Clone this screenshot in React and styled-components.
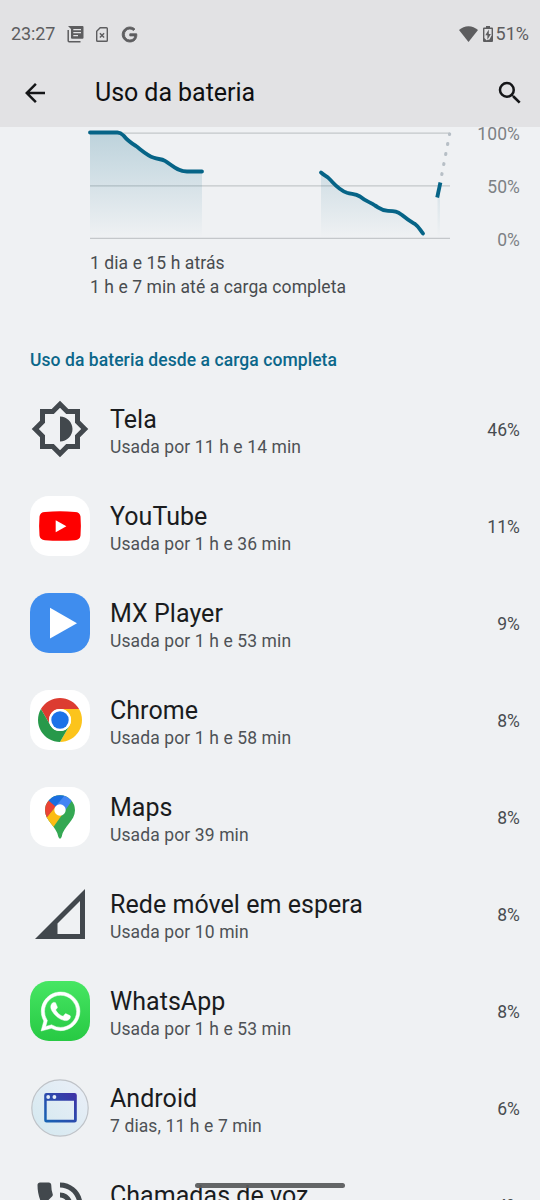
import React from 'react';
import styled, { createGlobalStyle } from 'styled-components';
import { SiGoogle, SiWhatsapp } from 'react-icons/si';

const GlobalStyle = createGlobalStyle`
    * {
        box-sizing: border-box;
    }

    body {
        margin: 0;
        background: #eff1f3;
        font-family: Roboto, "Noto Sans", sans-serif;
    }
`;

const Screen = styled.div`
    position: relative;
    display: flex;
    flex-direction: column;
    width: 540px;
    height: 1200px;
    overflow: hidden;
    background: #eff1f3;
`;

const Header = styled.header`
    flex: none;
    height: 127px;
    background: #e2e2e4;
`;

const StatusBar = styled.div`
    display: flex;
    align-items: center;
    justify-content: space-between;
    height: 58px;
    padding: 10px 11px 0 11px;
    color: #5d5d5f;
    font-size: 18px;
    line-height: 24px;
`;

const StatusGroup = styled.div`
    display: flex;
    align-items: center;
    gap: ${( { $gap } ) => $gap}px;
`;

const Clock = styled.span`
    letter-spacing: -0.1px;
`;

const Toolbar = styled.div`
    display: flex;
    align-items: center;
    height: 69px;
    padding: 0 15px 0 20px;
    color: #151618;
`;

const Title = styled.h1`
    flex: 1;
    margin: 0 0 0 45px;
    color: #0f1011;
    font-size: 25px;
    font-weight: 400;
    letter-spacing: -0.05px;
    line-height: 32px;
`;

const IconButton = styled.button`
    display: flex;
    padding: 0;
    border: 0;
    background: none;
    color: inherit;
`;

const ChartSection = styled.section`
    flex: none;
    display: flex;
    justify-content: space-between;
    height: 122px;
    padding: 0 20px 0 80px;
`;

const ScaleLabels = styled.div`
    display: flex;
    flex-direction: column;
    justify-content: space-between;
    height: 130px;
    margin-top: -5px;
    color: #7d8185;
    font-size: 17.5px;
    letter-spacing: 0.1px;
    line-height: 24px;
    text-align: right;
`;

const Summary = styled.p`
    flex: none;
    height: 92px;
    margin: 0;
    padding: 2px 0 0 90px;
    color: #484c4f;
    font-size: 17.5px;
    letter-spacing: 0.08px;
    line-height: 24px;
`;

const SectionTitle = styled.h2`
    flex: none;
    height: 40px;
    margin: 0;
    padding: 7px 0 0 30px;
    color: #0b678a;
    font-size: 17.5px;
    font-weight: 500;
    letter-spacing: 0.07px;
    line-height: 24px;
`;

const List = styled.ul`
    flex: none;
    margin: 0;
    padding: 0;
    list-style: none;
`;

const Row = styled.li`
    display: flex;
    align-items: center;
    height: 97px;
    padding: 0 20px 0 30px;
`;

const Label = styled.div`
    flex: 1;
    margin-left: 20px;
    padding-top: 5px;
`;

const Name = styled.div`
    color: #1a1c1e;
    font-size: 25px;
    letter-spacing: 0.04px;
    line-height: 30px;
`;

const Detail = styled.div`
    color: #4e5256;
    font-size: 17.5px;
    letter-spacing: 0.11px;
    line-height: 25px;
`;

const Percent = styled.span`
    color: #484c50;
    font-size: 17.5px;
    letter-spacing: 0.1px;
    line-height: 24px;
`;

const Tile = styled.div`
    flex: none;
    display: flex;
    align-items: center;
    justify-content: center;
    width: 60px;
    height: 60px;
    margin-bottom: 1px;
    border-radius: 19px;
    background: ${( { $background } ) => $background || 'transparent'};
    color: ${( { $color } ) => $color || '#42484d'};
`;

// gesture bar floats over the list
const HomeHandle = styled.div`
    position: absolute;
    bottom: 12px;
    left: 195px;
    width: 150px;
    height: 5px;
    border-radius: 3px;
    background: rgba(90, 91, 92, 0.94);
`;

const Glyph = ( { d, size = 60 } ) => (
    <svg width={size} height={size} viewBox="0 0 24 24" fill="currentColor">
        <path fillRule="evenodd" d={d} />
    </svg>
);

const paths = {
    back: 'M20 11H7.83l5.59-5.59L12 4l-8 8 8 8 1.41-1.41L7.83 13H20v-2z',
    search: 'M15.5 14h-.79l-.28-.27A6.47 6.47 0 0 0 16 9.5 6.5 6.5 0 1 0 9.5 16c1.61 0 3.09-.59 4.23-1.57l.27.28v.79l5 4.99L20.49 19l-4.99-5zm-6 0a4.5 4.5 0 1 1 0-9 4.5 4.5 0 0 1 0 9z',
    brightness: 'M20 8.69V4h-4.69L12 .69 8.69 4H4v4.69L.69 12 4 15.31V20h4.69L12 23.31 15.31 20H20v-4.69L23.31 12 20 8.69zM18 14.48V18h-3.52L12 20.48 9.52 18H6v-3.52L3.52 12 6 9.52V6h3.52L12 3.52 14.48 6H18v3.52L20.48 12 18 14.48zM12 7v10c2.76 0 5-2.24 5-5s-2.24-5-5-5z',
    signal: 'M2 22h20V2L2 22zM11 15.83l9-9V20h-9z',
    call: 'M20 15.5c-1.25 0-2.45-.2-3.57-.57a1.02 1.02 0 0 0-1.02.24l-2.2 2.2a15.05 15.05 0 0 1-6.59-6.59l2.2-2.21a.96.96 0 0 0 .25-1A11.36 11.36 0 0 1 8.5 4c0-.55-.45-1-1-1H4c-.55 0-1 .45-1 1 0 9.39 7.61 17 17 17 .55 0 1-.45 1-1v-3.5c0-.55-.45-1-1-1zM19 12h2c0-4.97-4.03-9-9-9v2c3.87 0 7 3.13 7 7zM15 12h2c0-2.76-2.24-5-5-5v2c1.66 0 3 1.34 3 3z'
};

const NewsIcon = () => (
    <svg width="17" height="17" viewBox="0 0 17 17">
        <path fill="currentColor" fillRule="evenodd" d="M1 0h14.5q1 0 1 1v10.800q0 1-1 1H5q-1 0-1-1V3zM6.300 3v1.300h7.700V3zM6.300 6v1.300h7.700V6zM6.300 9v1.300h4.700V9z" />
        <path fill="none" stroke="currentColor" strokeWidth="1.500" d="M1.200 4v10.800q0 .9.900.9H13.500" />
    </svg>
);

const SimIcon = () => (
    <svg width="12" height="15" viewBox="0 0 12 15" fill="none" stroke="currentColor" strokeWidth="1.400">
        <path d="M4.200.7h6.200q.9 0 .9.900v11.800q0 .9-.9.9H1.600q-.9 0-.9-.9V4.300z" />
        <path d="M3.900 6.200l4.200 4.200M8.100 6.200l-4.200 4.200" />
    </svg>
);

const WifiIcon = () => (
    <svg width="19" height="16" viewBox="0 0 19 16">
        <path fill="currentColor" d="M9.500 16L0 4.100Q4.200.3 9.500.3T19 4.100z" />
    </svg>
);

const BatteryIcon = () => (
    <svg width="10" height="16" viewBox="0 0 10 16">
        <path fill="currentColor" d="M3 0h4v1.500h2q1 0 1 1V15q0 1-1 1H1q-1 0-1-1V2.500q0-1 1-1h2z" />
        <path fill="#e2e2e4" d="M1.400 3h7.200v6.500L6.500 13.500 3.500 14.300 1.400 12z" />
        <path fill="currentColor" d="M5.800 3.500L2.300 9.300h2.100v4.500l3.500-5.900H5.800z" />
    </svg>
);

const BatteryChart = () => (
    <svg width="380" height="122" viewBox="80 127 380 122" fill="none">
        <defs>
            <linearGradient id="area" gradientUnits="userSpaceOnUse" x1="0" y1="133" x2="0" y2="238">
                <stop offset="0" stopColor="#0b678a" stopOpacity="0.22" />
                <stop offset="1" stopColor="#0b678a" stopOpacity="0" />
            </linearGradient>
        </defs>
        <path stroke="#c4c7ca" strokeWidth="1.300" d="M90 133.200H450M90 185.800H450M90 238.400H450" />
        <path fill="url(#area)" d="M90 132.500H118Q121 132.500 124 136C128 141 132 144 137 147C143 152 147 156 154 158C158 159.500 161 159 165 161C172 165 177 171 187 171.500H202V238H90z" />
        <path fill="url(#area)" d="M321 172.500C329 177 336 188 345 192.500C351 195 355 193.500 361 197C367 202 373 203 379 208C389 213 394 208 401 213C407 216 412 222 417 225Q420 228 423 233.500V238H321z" />
        <path fill="url(#area)" d="M437.500 196L440 184V238H437.500z" />
        <g stroke="#066487" strokeWidth="3.800" strokeLinecap="round" strokeLinejoin="round">
            <path d="M90 132.500H117.500Q120.500 132.500 123.500 135.500C127 140 131 143 136 146C142 150.500 147 155.500 154 157.800C158 159.500 161 158.500 165 160.800C172 165 177 171.300 187 171.500H202" />
            <path d="M321 172.500C324.500 175.500 327 176.500 329 178.500C335 184.500 338 189.500 347 192.800C352 194.500 355 193.500 360 196.500C366 201.500 370 202 375 205.500C380 208.500 381 210.500 388 210.800C395 211 397 211.500 402 215C408 220 410 221 415 224C419 227 420 230 423 233.500" />
            <path strokeLinecap="butt" d="M437.200 197.500L440.400 182.500" />
        </g>
        <path stroke="#b7bfc6" strokeWidth="3.200" strokeLinecap="round" strokeDasharray="0.800 9.400" d="M441.800 174.500L449.600 134" />
    </svg>
);

const YouTubeIcon = () => (
    <svg width="60" height="60" viewBox="0 0 60 60">
        <path fill="#fe0000" d="M15 15.900Q30 14.600 45 15.900Q50 16.100 50.500 20.500Q51.300 30 50.500 39.500Q50 43.900 45 44.200Q30 45.300 15 44.200Q10 43.900 9.500 39.500Q8.700 30 9.500 20.500Q10 16.100 15 15.900z" />
        <path fill="#fff" d="M25.700 24.200v12l10.700-6z" />
    </svg>
);

const PlayerIcon = () => (
    <svg width="60" height="60" viewBox="0 0 60 60">
        <path fill="#fff" d="M20 14.800v30.800l27-15.400z" />
    </svg>
);

const ChromeIcon = () => (
    <svg width="60" height="60" viewBox="0 0 60 60">
        <path fill="#dc3c31" d="M10.950 19A22 22 0 0 1 49.050 19H30A11 11 0 0 0 20.470 35.500z" />
        <path fill="#fcc41c" d="M49.050 19A22 22 0 0 1 30 52L39.530 35.500A11 11 0 0 0 30 19z" />
        <path fill="#27994a" d="M30 52A22 22 0 0 1 10.950 19L20.470 35.500A11 11 0 0 0 39.530 35.500z" />
        <circle cx="30" cy="30" r="11" fill="#fff" />
        <circle cx="30" cy="30" r="8.700" fill="#1c72e8" />
    </svg>
);

const MapsIcon = () => (
    <svg width="60" height="60" viewBox="0 0 60 60">
        <defs>
            <clipPath id="pin">
                <path d="M30 8.300A15 15 0 0 1 45 23.300C45 34 33.500 39 31.600 50Q30 53.400 28.400 50C26.500 39 15 34 15 23.300A15 15 0 0 1 30 8.300z" />
            </clipPath>
        </defs>
        <g clipPath="url(#pin)">
            <path fill="#34a853" d="M10 5h40v50H10z" />
            <path fill="#fbbc14" d="M10 38L26 19L34 25L22 42z" />
            <path fill="#ea4335" d="M10 5L26 19L16 31.500L10 38z" />
            <path fill="#1a6ee0" d="M12 5L18.500 13.500L26 20L37.500 5z" />
            <path fill="#4285f4" d="M37.500 5L25 20L34 25L48 5z" />
        </g>
        <circle cx="30" cy="23" r="5.700" fill="#fff" />
    </svg>
);

const AndroidIcon = () => (
    <svg width="60" height="60" viewBox="0 0 60 60">
        <defs>
            <linearGradient id="disc" x1="0" y1="1" x2="1" y2="0">
                <stop offset="0" stopColor="#d3e8ef" />
                <stop offset="1" stopColor="#ebeff8" />
            </linearGradient>
            <linearGradient id="window" x1="0" y1="1" x2="1" y2="0">
                <stop offset="0" stopColor="#1565b4" />
                <stop offset="1" stopColor="#4030a6" />
            </linearGradient>
        </defs>
        <circle cx="30" cy="30" r="28.200" fill="url(#disc)" stroke="#bfc3c8" strokeWidth="1.200" />
        <path fill="url(#window)" fillRule="evenodd" d="M16.500 15h28q2.300 0 2.300 2.300v24.900q0 2.300-2.300 2.300h-28q-2.300 0-2.300-2.300V17.300q0-2.300 2.300-2.300zM16.700 22.800v19h27.300v-19z" />
        <circle cx="18.200" cy="19" r="1.900" fill="#e4edf8" />
        <circle cx="24.400" cy="19" r="1.900" fill="#e4edf8" />
    </svg>
);

const GoogleMark = styled( SiGoogle )`
    margin-left: 2px;
    overflow: visible;
    stroke: currentColor;
    stroke-width: 1.4px;
`;

const WhatsAppMark = styled( SiWhatsapp )`
    overflow: visible;
    stroke: currentColor;
    stroke-width: 0.3px;
`;

const apps = [
    { name: 'Tela', detail: 'Usada por 11 h e 14 min', percent: 46, icon: <Glyph d={paths.brightness} /> },
    { name: 'YouTube', detail: 'Usada por 1 h e 36 min', percent: 11, icon: <YouTubeIcon />, background: '#fff' },
    { name: 'MX Player', detail: 'Usada por 1 h e 53 min', percent: 9, icon: <PlayerIcon />, background: '#3f8dee' },
    { name: 'Chrome', detail: 'Usada por 1 h e 58 min', percent: 8, icon: <ChromeIcon />, background: '#fff' },
    { name: 'Maps', detail: 'Usada por 39 min', percent: 8, icon: <MapsIcon />, background: '#fff' },
    { name: 'Rede móvel em espera', detail: 'Usada por 10 min', percent: 8, icon: <Glyph d={paths.signal} /> },
    { name: 'WhatsApp', detail: 'Usada por 1 h e 53 min', percent: 8, icon: <WhatsAppMark size={39} />, background: 'linear-gradient(#46e663, #27c943)', color: '#fff' },
    { name: 'Android', detail: '7 dias, 11 h e 7 min', percent: 6, icon: <AndroidIcon /> },
    { name: 'Chamadas de voz', detail: '', percent: 4, icon: <Glyph d={paths.call} /> }
];

const AppRow = ( { app } ) => (
    <Row>
        <Tile $background={app.background} $color={app.color}>{app.icon}</Tile>
        <Label>
            <Name>{app.name}</Name>
            <Detail>{app.detail || '\u00a0'}</Detail>
        </Label>
        <Percent>{app.percent}%</Percent>
    </Row>
);

export default function App () {
    return (
        <Screen>
            <GlobalStyle />
            <Header>
                <StatusBar>
                    <StatusGroup $gap={12}>
                        <Clock>23:27</Clock>
                        <NewsIcon />
                        <SimIcon />
                        <GoogleMark size={15} />
                    </StatusGroup>
                    <StatusGroup $gap={5}>
                        <WifiIcon />
                        <StatusGroup $gap={3}>
                            <BatteryIcon />
                            <span>51%</span>
                        </StatusGroup>
                    </StatusGroup>
                </StatusBar>
                <Toolbar>
                    <IconButton aria-label="Voltar"><Glyph d={paths.back} size={30} /></IconButton>
                    <Title>Uso da bateria</Title>
                    <IconButton aria-label="Pesquisar"><Glyph d={paths.search} size={30} /></IconButton>
                </Toolbar>
            </Header>
            <ChartSection>
                <BatteryChart />
                <ScaleLabels>
                    <span>100%</span>
                    <span>50%</span>
                    <span>0%</span>
                </ScaleLabels>
            </ChartSection>
            <Summary>
                1 dia e 15 h atrás<br />
                1 h e 7 min até a carga completa
            </Summary>
            <SectionTitle>Uso da bateria desde a carga completa</SectionTitle>
            <List>
                {apps.map( ( app ) => <AppRow key={app.name} app={app} /> )}
            </List>
            <HomeHandle />
        </Screen>
    );
}
